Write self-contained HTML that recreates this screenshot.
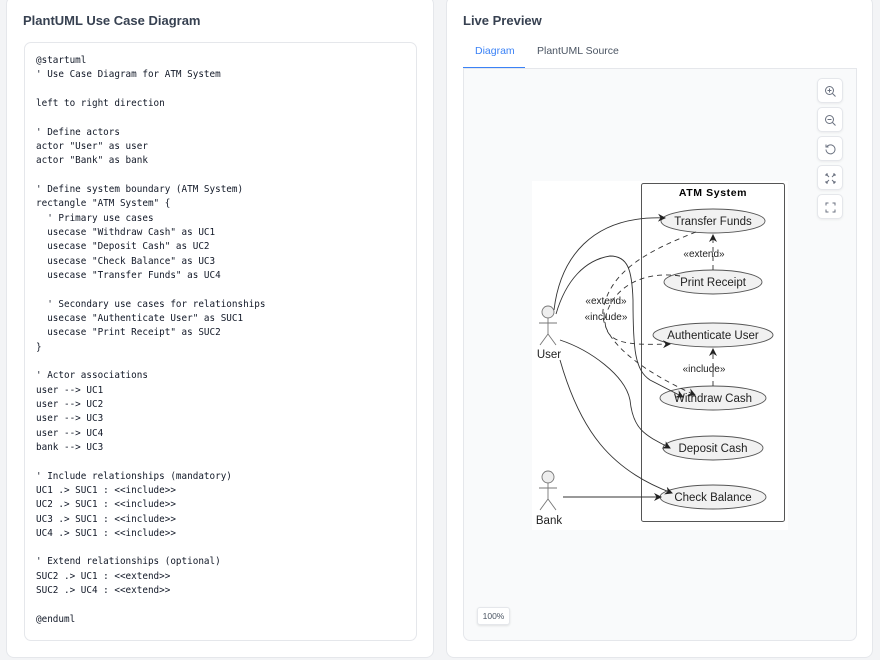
<!DOCTYPE html>
<html><head><meta charset="utf-8"><style>
*{box-sizing:border-box;margin:0;padding:0}
body{width:880px;height:660px;background:#f3f4f6;font-family:"Liberation Sans",sans-serif;position:relative;overflow:hidden}
.card{position:absolute;top:-4px;height:662px;background:#fff;border:1px solid #e5e7eb;border-radius:8px}
h2{position:absolute;font-size:13px;font-weight:bold;color:#374151}
.code{position:absolute;left:17px;top:45px;width:393px;height:599px;border:1px solid #e5e7eb;border-radius:7px;background:#fff}
pre{position:absolute;left:11px;top:11px;font-family:"DejaVu Sans Mono","Liberation Mono",monospace;font-size:9.3px;line-height:14.33px;color:#111827}
.tab{position:absolute;top:48px;font-size:10.5px}
.area{position:absolute;left:16px;top:72px;width:394px;height:572px;background:#f9fafb;border:1px solid #e5e7eb;border-top:none;border-radius:0 0 7px 7px}
.btn{position:absolute;left:353px;width:26px;height:25px;background:#fff;border:1px solid #e5e7eb;border-radius:5px;box-shadow:0 1px 2px rgba(0,0,0,.06)}
.btn svg{position:absolute;left:6px;top:6px}
</style></head><body>
<div class="card" style="left:6px;width:428px">
<h2 style="left:16px;top:16px">PlantUML Use Case Diagram</h2>
<div class="code"><pre>@startuml
' Use Case Diagram for ATM System

left to right direction

' Define actors
actor "User" as user
actor "Bank" as bank

' Define system boundary (ATM System)
rectangle "ATM System" {
  ' Primary use cases
  usecase "Withdraw Cash" as UC1
  usecase "Deposit Cash" as UC2
  usecase "Check Balance" as UC3
  usecase "Transfer Funds" as UC4

  ' Secondary use cases for relationships
  usecase "Authenticate User" as SUC1
  usecase "Print Receipt" as SUC2
}

' Actor associations
user --> UC1
user --> UC2
user --> UC3
user --> UC4
bank --> UC3

' Include relationships (mandatory)
UC1 .> SUC1 : &lt;&lt;include&gt;&gt;
UC2 .> SUC1 : &lt;&lt;include&gt;&gt;
UC3 .> SUC1 : &lt;&lt;include&gt;&gt;
UC4 .> SUC1 : &lt;&lt;include&gt;&gt;

' Extend relationships (optional)
SUC2 .> UC1 : &lt;&lt;extend&gt;&gt;
SUC2 .> UC4 : &lt;&lt;extend&gt;&gt;

@enduml</pre></div>
</div>
<div class="card" style="left:446px;width:427px">
<h2 style="left:16px;top:16px">Live Preview</h2>
<div class="tab" style="left:28px;color:#3b82f6">Diagram</div>
<div class="tab" style="left:90px;color:#4b5563">PlantUML Source</div>
<div style="position:absolute;left:16px;top:70px;width:62px;height:2px;background:#3b82f6"></div>
<div style="position:absolute;left:16px;top:71px;width:394px;height:1px;background:#e5e7eb"></div>
<div class="area">
<div class="btn" style="top:9px"><svg width="13" height="13" viewBox="0 0 13 13" fill="none" stroke="#6b7280" stroke-width="1"><circle cx="5.5" cy="5.5" r="4"/><path d="M8.5 8.5l3 3M3.5 5.5h4M5.5 3.5v4"/></svg></div>
<div class="btn" style="top:38px"><svg width="13" height="13" viewBox="0 0 13 13" fill="none" stroke="#6b7280" stroke-width="1"><circle cx="5.5" cy="5.5" r="4"/><path d="M8.5 8.5l3 3M3.5 5.5h4"/></svg></div>
<div class="btn" style="top:67px"><svg width="13" height="13" viewBox="0 0 13 13" fill="none" stroke="#6b7280" stroke-width="1"><path d="M3 3.5A4.5 4.5 0 1 1 2 6.5M2 1.5v2.5h2.5"/></svg></div>
<div class="btn" style="top:96px"><svg width="13" height="13" viewBox="0 0 13 13" fill="none" stroke="#6b7280" stroke-width="1"><path d="M2 2l3 3M2 2v2M2 2h2M11 2l-3 3M11 2v2M11 2h-2M2 11l3-3M2 11v-2M2 11h2M11 11l-3-3M11 11v-2M11 11h-2"/></svg></div>
<div class="btn" style="top:125px"><svg width="13" height="13" viewBox="0 0 13 13" fill="none" stroke="#6b7280" stroke-width="1"><path d="M2 4.5V2h2.5M8.5 2H11v2.5M11 8.5V11H8.5M4.5 11H2V8.5"/></svg></div>
<div style="position:absolute;left:13px;top:538px;width:33px;height:18px;background:#fff;border:1px solid #e5e7eb;border-radius:3px;box-shadow:0 1px 2px rgba(0,0,0,.1);font-size:8.5px;color:#4b5563;text-align:center;line-height:16px">100%</div>
</div>
</div>
<svg style="position:absolute;left:532px;top:181px" width="256" height="349" viewBox="532 181 256 349" font-family="Liberation Sans,sans-serif">
<defs><marker id="a" markerWidth="8" markerHeight="8" refX="7" refY="4" orient="auto" markerUnits="userSpaceOnUse"><path d="M0 0L8 4L0 8L2.5 4z" fill="#222"/></marker></defs>
<rect x="532" y="181" width="256" height="349" fill="#fff"/>
<rect x="641.5" y="183.5" width="143" height="338" rx="2" fill="none" stroke="#555"/>
<text x="713" y="196" text-anchor="middle" font-size="10.5" font-weight="bold" letter-spacing=".6">ATM System</text>
<g fill="#f1f1f1" stroke="#555" stroke-width=".9">
<ellipse cx="713" cy="221" rx="52" ry="12"/><ellipse cx="713" cy="282" rx="49" ry="12"/>
<ellipse cx="713" cy="335" rx="60" ry="12"/><ellipse cx="713" cy="398" rx="53" ry="12"/>
<ellipse cx="713" cy="448" rx="50" ry="12"/><ellipse cx="713" cy="497" rx="53" ry="12"/>
</g>
<g font-size="11.5" text-anchor="middle" fill="#222">
<text x="713" y="225">Transfer Funds</text><text x="713" y="286">Print Receipt</text>
<text x="713" y="339">Authenticate User</text><text x="713" y="402">Withdraw Cash</text>
<text x="713" y="452">Deposit Cash</text><text x="713" y="501">Check Balance</text>
<text x="549" y="358">User</text><text x="549" y="524">Bank</text>
</g>
<g fill="#eee" stroke="#777" stroke-width=".9">
<circle cx="548" cy="312" r="6"/><circle cx="548" cy="477" r="6"/>
</g>
<g fill="none" stroke="#777" stroke-width=".9">
<path d="M548 318v16M539 323h18M548 334l-8 11M548 334l8 11"/>
<path d="M548 483v16M539 488h18M548 499l-8 11M548 499l8 11"/>
</g>
<g fill="none" stroke="#333" stroke-width=".9">
<path d="M554 310C560 260 590 215 665 218" marker-end="url(#a)"/>
<path d="M556 314C566 280 585 260 610 256C628 256 632 270 633 300C633 350 635 370 650 380L683 397" marker-end="url(#a)"/>
<path d="M560 340C590 350 625 375 630 400C633 430 645 435 670 448" marker-end="url(#a)"/>
<path d="M560 360C580 430 610 470 672 493" marker-end="url(#a)"/>
<path d="M563 497H661" marker-end="url(#a)"/>
</g>
<g fill="none" stroke="#333" stroke-width=".9" stroke-dasharray="5,4">
<path d="M696 232C650 250 610 270 603 310C600 340 640 370 695 395" marker-end="url(#a)"/>
<path d="M680 276C640 270 610 290 605 320C605 345 630 345 670 344" marker-end="url(#a)"/>
<path d="M713 270V235" marker-end="url(#a)"/>
<path d="M713 386V349" marker-end="url(#a)"/>
</g>
<g font-size="10" text-anchor="middle" fill="#222">
<text x="704" y="257">«extend»</text><text x="704" y="372">«include»</text>
<text x="606" y="304">«extend»</text><text x="606" y="320">«include»</text>
</g>
</svg>
</body></html>
